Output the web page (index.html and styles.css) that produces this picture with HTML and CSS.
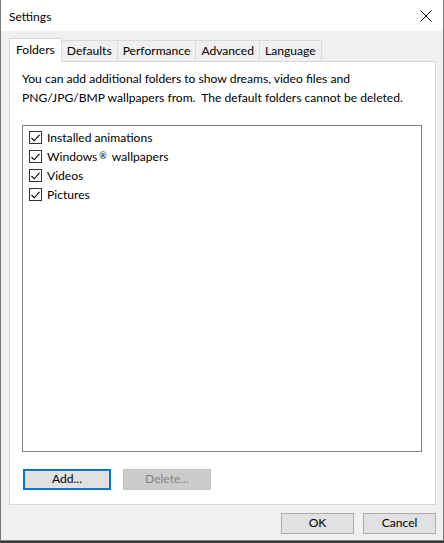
FILE: index.html
```html
<!DOCTYPE html>
<html>
<head>
<meta charset="utf-8">
<link rel="stylesheet" href="styles.css">
</head>
<body>
<div class="window">
  <div class="titlebar">
    <span class="title">Settings</span>
    <svg class="close" width="12" height="12" viewBox="0 0 12 12"><path d="M0.5 0.5 L11.5 11.5 M11.5 0.5 L0.5 11.5" stroke="#000" stroke-width="1" fill="none"/></svg>
  </div>
  <div class="content">
    <div class="tabs">
      <div class="tab active">Folders</div>
      <div class="tab">Defaults</div>
      <div class="tab">Performance</div>
      <div class="tab">Advanced</div>
      <div class="tab">Language</div>
    </div>
    <div class="panel">
      <p class="desc">You can add additional folders to show dreams, video files and<br>PNG/JPG/BMP wallpapers from.&nbsp; The default folders cannot be deleted.</p>
      <div class="list">
        <div class="item"><span class="cb"><svg width="9" height="8" viewBox="0 0 9 8"><path d="M0.5 4 L3.2 6.8 L8.5 0.8" stroke="#000" stroke-width="1.1" fill="none"/></svg></span>Installed animations</div>
        <div class="item"><span class="cb"><svg width="9" height="8" viewBox="0 0 9 8"><path d="M0.5 4 L3.2 6.8 L8.5 0.8" stroke="#000" stroke-width="1.1" fill="none"/></svg></span>Windows<span class="reg">®</span> wallpapers</div>
        <div class="item"><span class="cb"><svg width="9" height="8" viewBox="0 0 9 8"><path d="M0.5 4 L3.2 6.8 L8.5 0.8" stroke="#000" stroke-width="1.1" fill="none"/></svg></span>Videos</div>
        <div class="item"><span class="cb"><svg width="9" height="8" viewBox="0 0 9 8"><path d="M0.5 4 L3.2 6.8 L8.5 0.8" stroke="#000" stroke-width="1.1" fill="none"/></svg></span>Pictures</div>
      </div>
      <div class="panel-buttons">
        <button class="btn focused">Add...</button>
        <button class="btn disabled">Delete...</button>
      </div>
    </div>
    <div class="dialog-buttons">
      <button class="btn wide">OK</button>
      <button class="btn wide">Cancel</button>
    </div>
  </div>
</div>
</body>
</html>
```

FILE: styles.css
```css
html, body {
  margin: 0;
  padding: 0;
  background: #3a3a3a;
  width: 444px;
  height: 543px;
  overflow: hidden;
}
.window {
  box-sizing: border-box;
  width: 444px;
  height: 541px;
  border: 1px solid #7a7a7a;
  border-top: none;
  background: #f0f0f0;
  font-family: Lato, "Noto Sans", sans-serif;
  font-size: 12.1px;
  color: #000;
  display: flex;
  flex-direction: column;
}
.titlebar {
  height: 31px;
  background: #fff;
  display: flex;
  align-items: center;
  justify-content: space-between;
  padding: 0 10px 0 8px;
}
.title {
  padding-top: 1px;
}
.close {
  margin-right: 1px;
}
.content {
  flex: 1;
  display: flex;
  flex-direction: column;
  padding: 7px 7px 0 8px;
}
.tabs {
  display: flex;
  align-items: flex-end;
  height: 23px;
  position: relative;
  z-index: 1;
}
.tab {
  box-sizing: border-box;
  height: 21px;
  padding: 0 5px;
  border: 1px solid #d9d9d9;
  border-left: none;
  border-bottom: none;
  background: #f0f0f0;
  display: flex;
  align-items: center;
  line-height: 1;
}
.tab.active {
  height: 24px;
  background: #fff;
  border-left: 1px solid #d9d9d9;
  padding: 0 6px;
  margin-bottom: -1px;
}
.panel {
  box-sizing: border-box;
  height: 444px;
  background: #fff;
  border: 1px solid #d9d9d9;
  padding: 7px 13px 0 12px;
  display: flex;
  flex-direction: column;
}
.desc {
  margin: 0;
  line-height: 19px;
}
.list {
  box-sizing: border-box;
  margin-top: 18px;
  height: 327px;
  border: 1px solid #828282;
  padding: 2px 0 0 6px;
}
.item {
  display: flex;
  align-items: center;
  height: 19px;
}
.cb {
  box-sizing: border-box;
  width: 13px;
  height: 13px;
  border: 1px solid #333;
  margin-right: 5px;
  display: flex;
  align-items: center;
  justify-content: center;
}
.reg {
  font-size: 9px;
  position: relative;
  top: -1px;
  margin: 0 5px 0 2px;
}
.panel-buttons {
  display: flex;
  gap: 12px;
  margin-top: 17px;
  padding-left: 1px;
}
.btn {
  box-sizing: border-box;
  width: 88px;
  height: 21px;
  font-family: inherit;
  font-size: inherit;
  background: #e1e1e1;
  border: 1px solid #adadad;
  color: #000;
  padding: 0;
  line-height: 1;
}
.btn.focused {
  border: 2px solid #0078d7;
}
.btn.disabled {
  background: #cccccc;
  border-color: #c4c4c4;
  color: #838383;
}
.dialog-buttons {
  display: flex;
  justify-content: flex-end;
  gap: 9px;
  margin-top: 8px;
}
.btn.wide {
  width: 73px;
}
```
